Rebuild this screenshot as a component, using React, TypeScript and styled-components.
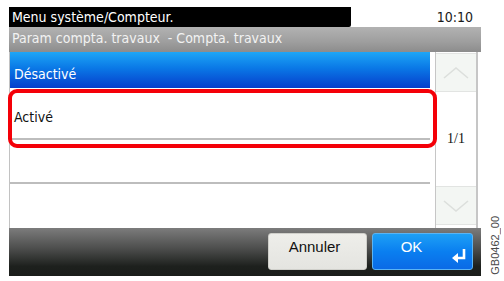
import React from "react";
import styled, { createGlobalStyle } from "styled-components";

const Global = createGlobalStyle`
  html, body { margin: 0; padding: 0; background: #fff; }
  body { font-family: "DejaVu Sans Condensed", "DejaVu Sans", sans-serif; }
`;

const Page = styled.div`
  display: flex;
  padding: 7px 0 0 9px;
  width: 504px;
  height: 281px;
  box-sizing: border-box;
`;

const Screen = styled.div`
  display: flex;
  flex-direction: column;
  width: 472px;
`;

const Header = styled.div`
  display: flex;
  align-items: stretch;
  height: 20px;
  padding-right: 8px;
`;

const TitleBar = styled.div`
  width: 342px;
  background: #000;
  color: #fff;
  font-size: 14px;
  line-height: 20px;
  padding-left: 3px;
  box-sizing: border-box;
  border-bottom-right-radius: 2px;
  white-space: nowrap;
`;

const Clock = styled.div`
  margin-left: auto;
  color: #1a1a1a;
  font-size: 14px;
  line-height: 20px;
`;

const SubBar = styled.div`
  height: 25px;
  background: linear-gradient(#b2b2b2, #9e9e9e 60%, #8c8c8c);
  color: #f2f2f2;
  font-size: 14px;
  line-height: 23px;
  padding-left: 3px;
  white-space: pre;
`;

const Body = styled.div`
  position: relative;
  display: flex;
  gap: 5px;
  height: 176px;
`;

const List = styled.div`
  width: 421px;
  display: flex;
  flex-direction: column;
  border-left: 1px solid #c2c2c2;
  box-sizing: border-box;
`;

const Row = styled.div<{ $selected?: boolean; $last?: boolean }>`
  height: 44px;
  box-sizing: border-box;
  display: flex;
  align-items: center;
  padding-left: 4px;
  font-size: 14px;
  color: ${(p) => (p.$selected ? "#fff" : "#111")};
  background: ${(p) =>
    p.$selected
      ? "linear-gradient(#1ea6f6, #0a78e6 45%, #063ecc) top / 100% 36px no-repeat"
      : "#fff"};
  border-bottom: ${(p) => (p.$selected || p.$last ? "none" : "2px solid #bdbdbd")};
`;

const Highlight = styled.div`
  position: absolute;
  left: -1px;
  top: 37px;
  width: 429px;
  height: 59px;
  border: 4px solid #f40008;
  border-radius: 9px;
  box-sizing: border-box;
  pointer-events: none;
`;

const Scroller = styled.div`
  width: 43px;
  display: flex;
  flex-direction: column;
  justify-content: space-between;
  border-left: 1px solid #c6c6c6;
  border-right: 2px solid #c6c6c6;
  box-sizing: border-box;
  padding: 1px 0 3px;
`;

const ArrowBox = styled.div`
  height: 37px;
  background: #f3f6f3;
  border-bottom: 1px solid #e2e4e2;
  border-top: 1px solid #e2e4e2;
  display: flex;
  align-items: center;
  justify-content: center;
`;

const PageCount = styled.div`
  font-family: "Liberation Serif", serif;
  font-size: 14px;
  color: #111;
  text-align: center;
`;

const Footer = styled.div`
  height: 48px;
  background: linear-gradient(#7c7c7c, #4a4b4a 45%, #1d201d 80%, #1a1d1a);
  display: flex;
  justify-content: flex-end;
  align-items: flex-start;
  gap: 5px;
  padding: 5px 8px 0 0;
  box-sizing: border-box;
`;

const Button = styled.div<{ $primary?: boolean }>`
  position: relative;
  width: ${(p) => (p.$primary ? "101px" : "99px")};
  height: 37px;
  box-sizing: border-box;
  border-radius: 3px;
  font-family: "Liberation Sans", Arial, sans-serif;
  font-size: 15px;
  text-align: center;
  padding-top: 4px;
  padding-right: ${(p) => (p.$primary ? "22px" : "6px")};
  color: ${(p) => (p.$primary ? "#fff" : "#111")};
  background: ${(p) =>
    p.$primary
      ? "linear-gradient(#1ea0f6, #0a7ff0 50%, #0a6ae6)"
      : "linear-gradient(#eeeeea, #e4e4e0)"};
  border: 1px solid ${(p) => (p.$primary ? "#5ab4f4" : "#cfcfca")};
`;

const EnterIcon = styled.svg`
  position: absolute;
  right: 5px;
  bottom: 5px;
`;

const Side = styled.div`
  align-self: flex-end;
  margin: 0 0 6px 8px;
  writing-mode: vertical-rl;
  transform: rotate(180deg);
  font-family: "Liberation Sans", Arial, sans-serif;
  font-size: 11px;
  color: #4a4a4a;
`;

const Chevron = ({ up }: { up?: boolean }) => (
  <svg width="28" height="14" viewBox="0 0 28 14">
    <polyline
      points={up ? "2,12 14,2 26,12" : "2,2 14,12 26,2"}
      fill="none"
      stroke="#dcdfdc"
      strokeWidth="1.6"
    />
  </svg>
);

export default function App() {
  return (
    <>
      <Global />
      <Page>
        <Screen>
          <Header>
            <TitleBar>Menu système/Compteur.</TitleBar>
            <Clock>10:10</Clock>
          </Header>
          <SubBar>{"Param compta. travaux  - Compta. travaux"}</SubBar>
          <Body>
            <List>
              <Row $selected>Désactivé</Row>
              <Row>Activé</Row>
              <Row></Row>
              <Row $last></Row>
            </List>
            <Scroller>
              <ArrowBox>
                <Chevron up />
              </ArrowBox>
              <PageCount>1/1</PageCount>
              <ArrowBox>
                <Chevron />
              </ArrowBox>
            </Scroller>
            <Highlight />
          </Body>
          <Footer>
            <Button>Annuler</Button>
            <Button $primary>
              OK
              <EnterIcon width="16" height="16" viewBox="0 0 16 16">
                <path d="M13 1 V10 H6" fill="none" stroke="#fff" strokeWidth="2.6" />
                <polygon points="1,10 7,5 7,15" fill="#fff" />
              </EnterIcon>
            </Button>
          </Footer>
        </Screen>
        <Side>GB0462_00</Side>
      </Page>
    </>
  );
}
